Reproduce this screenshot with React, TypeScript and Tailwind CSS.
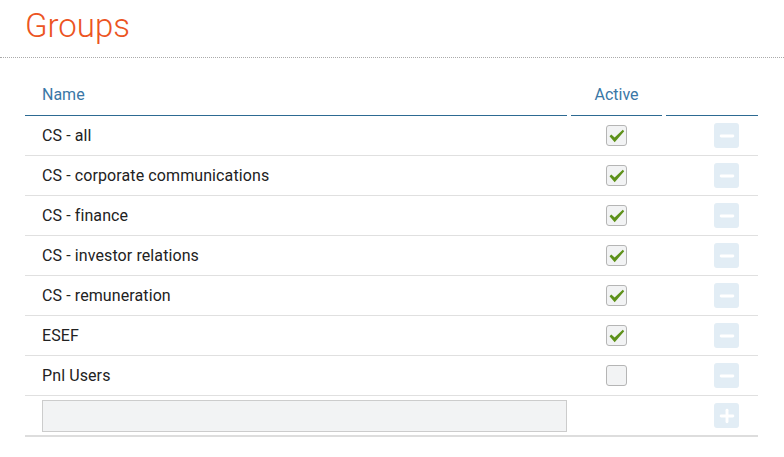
import { Minus, Plus } from "lucide-react"

interface Group {
  name: string
  active: boolean
}

const groups: Group[] = [
  { name: "CS - all", active: true },
  { name: "CS - corporate communications", active: true },
  { name: "CS - finance", active: true },
  { name: "CS - investor relations", active: true },
  { name: "CS - remuneration", active: true },
  { name: "ESEF", active: true },
  { name: "Pnl Users", active: false },
]

const cols = "grid grid-cols-[542px_91px_92px] gap-x-[4px]"

function ActiveBox({ checked }: { checked: boolean }) {
  return (
    <div className="w-[21px] h-[21px] rounded-[3px] border border-[#b5b5b5] bg-[#f2f3f4] relative">
      {checked && (
        <svg viewBox="0 0 21 21" className="absolute -left-px -top-px w-[21px] h-[21px]">
          <path d="M3.5 11.2 L5.3 9.6 L8.6 12.6 L16.8 4.8 L18.2 6.2 L8.7 17.2 Z" fill="#5d911a" />
        </svg>
      )}
    </div>
  )
}

function IconButton({ kind }: { kind: "minus" | "plus" }) {
  const Icon = kind === "minus" ? Minus : Plus
  return (
    <button className="w-[25px] h-[25px] rounded-[3px] bg-[#e2edf5] flex items-center justify-center">
      <Icon className="w-[20px] h-[20px] text-white" strokeWidth={3.5} />
    </button>
  )
}

export default function App() {
  return (
    <div className="w-[784px] h-[457px] bg-white font-['Roboto',sans-serif] overflow-hidden">
      <div className="h-[58px] border-b border-dotted border-[#aaaaaa] pl-[25px] pt-[1px]">
        <h1 className="text-[33px] font-light text-[#ec5422] leading-[50px]">Groups</h1>
      </div>

      <div className="ml-[25px] w-[733px] mt-[17px]">
        {/* cabecera */}
        <div className={cols}>
          <div className="h-[41px] border-b border-[#2d6a92] pl-[17px] flex items-center text-[16px] text-[#3a77a6]">
            Name
          </div>
          <div className="h-[41px] border-b border-[#2d6a92] flex items-center justify-center text-[16px] text-[#3a77a6]">
            Active
          </div>
          <div className="h-[41px] border-b border-[#2d6a92]" />
        </div>

        {groups.map((g) => (
          <div key={g.name} className={`${cols} h-[40px] border-b border-[#e0e0e0]`}>
            <div className="pl-[17px] flex items-center text-[16px] text-[#222222] tracking-[0.1px]">{g.name}</div>
            <div className="flex items-center justify-center">
              <ActiveBox checked={g.active} />
            </div>
            <div className="flex items-center justify-end pr-[19px]">
              <IconButton kind="minus" />
            </div>
          </div>
        ))}

        {/* fila nueva */}
        <div className={`${cols} h-[41px] border-b-2 border-[#dddddd]`}>
          <div className="pl-[17px] flex items-center">
            <input
              type="text"
              className="w-[526px] h-[32px] bg-[#f2f3f4] border border-[#cccccc] outline-none px-2 text-[16px]"
            />
          </div>
          <div />
          <div className="flex items-center justify-end pr-[19px]">
            <IconButton kind="plus" />
          </div>
        </div>
      </div>
    </div>
  )
}
